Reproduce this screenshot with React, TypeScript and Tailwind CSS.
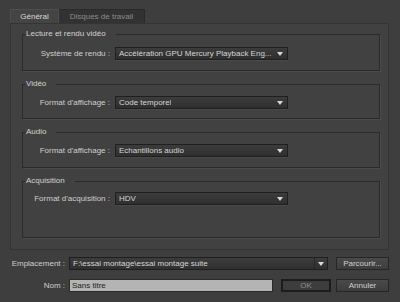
import React from "react";

function Dropdown({ value, width }: { value: string; width: string }) {
  return (
    <div
      className={`${width} h-[13px] flex items-center justify-between border border-[#1f1f1f] bg-gradient-to-b from-[#3c3c3c] to-[#2f2f2f] pl-[3px] pr-[4px] text-[#d6d6d6] shadow-[0_1px_0_#4a4a4a]`}
    >
      <span className="whitespace-nowrap overflow-hidden">{value}</span>
      <svg className="w-[6px] h-[4px] shrink-0" viewBox="0 0 6 4">
        <path d="M0 0h6L3 4z" fill="#d8d8d8" />
      </svg>
    </div>
  );
}

function Group({
  title,
  label,
  value,
  h,
  pt,
}: {
  title: string;
  label: string;
  value: string;
  h: string;
  pt: string;
}) {
  return (
    <fieldset
      className={`${h} w-[358px] border border-[#2a2a2a] shadow-[1px_1px_0_#4b4b4b]`}
    >
      <legend className="ml-[2px] pl-[1px] pr-[10px] leading-[10px] text-[#d2d2d2]">
        {title}
      </legend>
      <div className={`flex items-center ${pt}`}>
        <div className="w-[87px] text-right text-[#cfcfcf] whitespace-nowrap">{label}</div>
        <div className="ml-[5px]">
          <Dropdown value={value} width="w-[173px]" />
        </div>
      </div>
    </fieldset>
  );
}

export default function App() {
  return (
    <div
      className="w-[400px] h-[302px] bg-[#3e3e3e] pt-[9px] px-[10px] text-[8px] leading-none"
      style={{ fontFamily: '"Liberation Sans", Arial, sans-serif' }}
    >
      {/* Tabs */}
      <div className="flex h-[14px]">
        <div className="w-[49px] flex items-center justify-center bg-[#444444] border-t border-l border-r border-[#4e4e4e] text-[#d8d8d8]">
          Général
        </div>
        <div className="w-[86px] flex items-center justify-center bg-[#323232] border-t border-r border-[#2a2a2a] text-[#8c8c8c]">
          Disques de travail
        </div>
      </div>

      {/* Panel */}
      <div className="w-[379px] h-[227px] border border-[#343434] bg-[#414141] pl-[11px] pt-[5px] flex flex-col gap-[8px]">
        <Group
          title="Lecture et rendu vidéo"
          label="Système de rendu :"
          value="Accélération GPU Mercury Playback Eng..."
          h="h-[42px]"
          pt="pt-[8px]"
        />
        <Group
          title="Vidéo"
          label="Format d'affichage :"
          value="Code temporel"
          h="h-[40px]"
          pt="pt-[7px]"
        />
        <Group
          title="Audio"
          label="Format d'affichage :"
          value="Echantillons audio"
          h="h-[41px]"
          pt="pt-[7px]"
        />
        <Group
          title="Acquisition"
          label="Format d'acquisition :"
          value="HDV"
          h="h-[62px]"
          pt="pt-[6px]"
        />
      </div>

      {/* Emplacement */}
      <div className="flex items-center h-[13px] mt-[7px]">
        <div className="w-[55px] text-right text-[#cfcfcf] whitespace-nowrap">Emplacement :</div>
        <div className="ml-[4px] w-[259px] h-[13px] flex border border-[#1f1f1f] bg-gradient-to-b from-[#3c3c3c] to-[#303030] text-[#d6d6d6]">
          <div className="flex-1 flex items-center pl-[3px] whitespace-nowrap">
            F:\essai montage\essai montage suite
          </div>
          <div className="w-[13px] flex items-center justify-center border-l border-[#262626]">
            <svg className="w-[6px] h-[4px]" viewBox="0 0 6 4">
              <path d="M0 0h6L3 4z" fill="#d8d8d8" />
            </svg>
          </div>
        </div>
        <button className="ml-[8px] w-[53px] h-[13px] border border-[#262626] bg-gradient-to-b from-[#4a4a4a] to-[#3d3d3d] text-[#d0d0d0] flex items-center justify-center">
          Parcourir...
        </button>
      </div>

      {/* Nom */}
      <div className="flex items-center h-[13px] mt-[9px]">
        <div className="w-[55px] text-right text-[#cfcfcf]">Nom :</div>
        <div className="ml-[4px] w-[204px] h-[13px] flex items-center border border-[#2a2a2a] bg-[#b4b4b4] pl-[2px] text-[#1e1e1e]">
          Sans titre
        </div>
        <button className="ml-[8px] w-[50px] h-[13px] border-2 border-[#1c1c1c] bg-[#3d3d3d] text-[#8e8e8e] flex items-center justify-center">
          OK
        </button>
        <button className="ml-[5px] w-[53px] h-[13px] border border-[#262626] bg-gradient-to-b from-[#4a4a4a] to-[#3d3d3d] text-[#d0d0d0] flex items-center justify-center">
          Annuler
        </button>
      </div>
    </div>
  );
}
